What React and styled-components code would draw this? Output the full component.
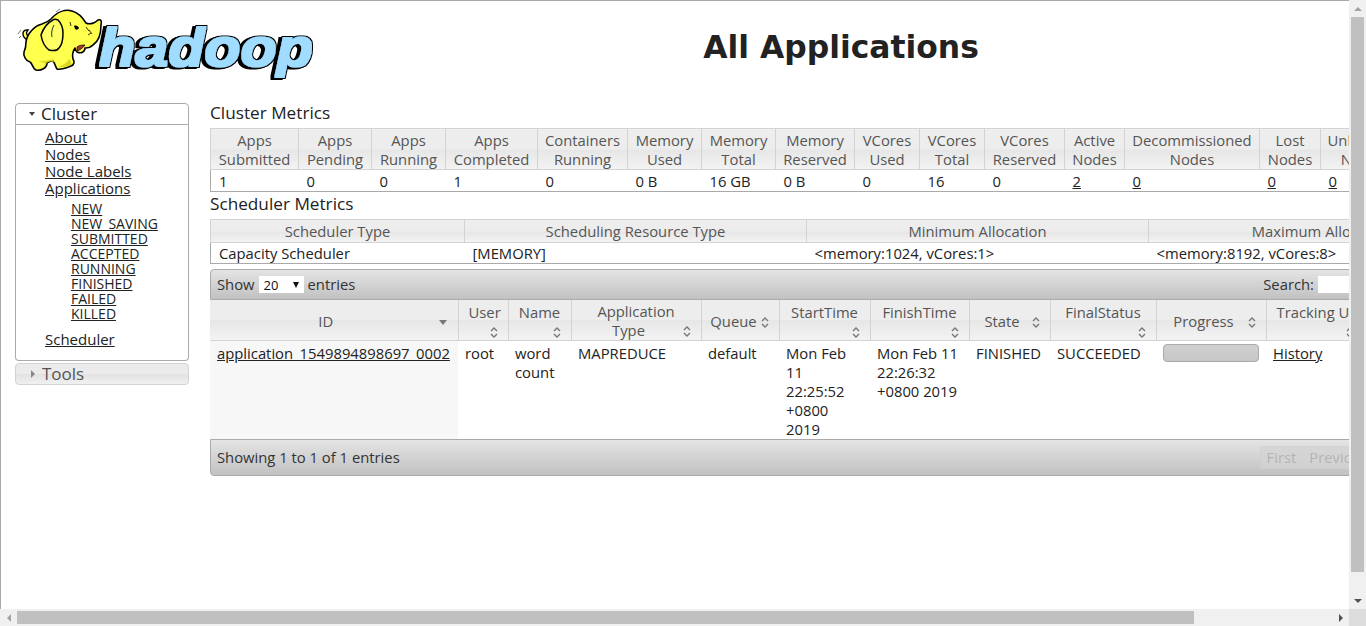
import React from "react";
import styled, { createGlobalStyle } from "styled-components";

const Global = createGlobalStyle`
  html, body { margin: 0; padding: 0; height: 100%; overflow: hidden; background: #fff; }
  body { font-family: "Open Sans", "Noto Sans", "Liberation Sans", sans-serif; font-size: 14.8px; color: #222; }
`;

const Shell = styled.div`
  display: grid;
  grid-template-columns: 1fr 17px;
  grid-template-rows: 1fr 17px;
  width: 1366px;
  height: 626px;
`;

const Viewport = styled.div`
  overflow: hidden;
  border-left: 1px solid #aaa;
  border-top: 1px solid #aaa;
`;

const Page = styled.div`
  width: 1506px;
`;

const Header = styled.header`
  display: flex;
  align-items: flex-start;
  height: 102px;
`;

const Logo = styled.svg`
  flex: none;
  width: 315px;
  height: 85px;
`;

const Wordmark = styled.text`
  font-family: "Liberation Sans", sans-serif;
  font-weight: 700;
  font-style: italic;
  font-size: 53px;
  fill: #9fdcff;
`;

const Title = styled.h1`
  margin: 26px 0 0;
  width: 1050px;
  text-align: center;
  font-family: "DejaVu Sans", sans-serif;
  font-size: 31.4px;
  line-height: 40px;
  font-weight: 700;
  color: #222;
`;

const Columns = styled.div`
  display: flex;
  align-items: flex-start;
`;

const Sidebar = styled.nav`
  flex: none;
  width: 174px;
  margin-left: 14px;
  margin-right: 21px;
`;

const AccordionHead = styled.div`
  display: flex;
  align-items: center;
  height: 19px;
  padding: 0 0 1px 13px;
  gap: 6px;
  font-size: 17px;
  color: ${p => (p.$open ? "#222" : "#555")};
  border: 1px solid #aaa;
  border-radius: ${p => (p.$open ? "4px 4px 0 0" : "4px")};
  background: ${p =>
    p.$open ? "#fff" : "linear-gradient(#ebebeb 0 50%, #e2e2e2 50%, #f0f0f0 100%)"};
  ${p => (p.$open ? "" : "margin-top: 2px; border-color: #d3d3d3;")}
`;

const Caret = styled.span`
  width: 0;
  height: 0;
  border-style: solid;
  ${p =>
    p.$open
      ? "border-width: 4px 3.5px 0 3.5px; border-color: #444 transparent transparent transparent;"
      : "border-width: 4px 0 4px 4px; border-color: transparent transparent transparent #888; margin-left: 2px; margin-right: 1px;"}
`;

const AccordionBody = styled.div`
  height: 231px;
  border: 1px solid #aaa;
  border-top: 0;
  border-radius: 0 0 4px 4px;
  padding: 4px 0 0 29px;
`;

const NavList = styled.ul`
  list-style: none;
  margin: 0;
  padding: 0;
`;

const NavItem = styled.li`
  font-size: 15px;
  line-height: 17px;
`;

const SubList = styled.ul`
  list-style: none;
  margin: 4px 0 10px;
  padding: 0 0 0 26px;
`;

const SubItem = styled.li`
  font-size: 14px;
  line-height: 15px;
`;

const Link = styled.a`
  color: #222;
  text-decoration: underline;
`;

const Content = styled.main`
  flex: none;
  width: 1287px;
`;

const SectionTitle = styled.h3`
  margin: ${p => p.$top || 0}px 0 0;
  padding-bottom: 6px;
  font-size: 17.2px;
  line-height: 19px;
  font-weight: 400;
  color: #222;
`;

const MetricsTable = styled.table`
  width: 100%;
  table-layout: fixed;
  border-collapse: collapse;
  border: 1px solid #aaa;
  border-top-color: #d3d3d3;
  margin-bottom: ${p => p.$gap || 0}px;
`;

const headBg = "linear-gradient(#ededed 0 50%, #e6e6e6 50%, #f3f3f3 100%)";

const HeadCell = styled.th`
  padding: ${p => p.$pad};
  font-weight: 400;
  line-height: 19px;
  color: #555;
  text-align: center;
  background: ${headBg};
  border: 1px solid #d3d3d3;
  border-top: 0;
  white-space: nowrap;
  overflow: hidden;
`;

const Cell = styled.td`
  padding: ${p => p.$top}px 8px 0;
  height: ${p => p.$h}px;
  box-sizing: border-box;
  line-height: 19px;
  white-space: nowrap;
  overflow: hidden;
`;

const Toolbar = styled.div`
  display: flex;
  align-items: center;
  justify-content: space-between;
  box-sizing: border-box;
  height: ${p => p.$height}px;
  padding: 0 6px 1px;
  color: #333;
  border: 1px solid #aaa;
  border-radius: ${p => p.$radius};
  background: linear-gradient(#e4e4e4, #c1c1c1);
`;

const Group = styled.div`
  display: flex;
  align-items: center;
  gap: 4px;
`;

const SelectWrap = styled.span`
  position: relative;
  display: block;
  width: 45px;
  height: 17px;
  background: #fff;
`;

const Select = styled.select`
  appearance: none;
  display: block;
  width: 100%;
  height: 100%;
  border: 0;
  padding: 0 0 0 5px;
  background: transparent;
  font: inherit;
  font-size: 13px;
  color: #111;
`;

const SelectArrow = styled.span`
  position: absolute;
  right: 5px;
  top: 6px;
  width: 0;
  height: 0;
  border-style: solid;
  border-width: 6px 3.5px 0 3.5px;
  border-color: #111 transparent transparent transparent;
`;

const SearchInput = styled.input`
  width: 172px;
  height: 17px;
  border: 0;
  padding: 0;
  background: #fff;
`;

const AppsTable = styled.table`
  width: 100%;
  table-layout: fixed;
  border-collapse: collapse;
`;

const SortIcon = styled.svg`
  float: right;
  width: 8px;
  height: 13px;
  margin: 4px 0 0 7px;
`;

const AppHead = styled.th`
  height: 40px;
  box-sizing: border-box;
  padding: 2px 10px 0 ${p => (p.$tight ? 7 : 10)}px;
  font-weight: 400;
  line-height: 19px;
  color: #555;
  text-align: center;
  vertical-align: middle;
  background: ${headBg};
  border-right: 1px solid #d3d3d3;
  border-bottom: 1px solid #d3d3d3;
  overflow: hidden;
  ${SortIcon} {
    margin-left: ${p => (p.$tight ? 2 : 7)}px;
  }
`;

const AppCell = styled.td`
  padding: 3px 7px 0;
  vertical-align: top;
  line-height: 19px;
  height: 97px;
  box-sizing: border-box;
  overflow: hidden;
  background: ${p => (p.$sorted ? "#f7f7f7" : "#fff")};
`;

const SortedIcon = styled.span`
  float: right;
  width: 0;
  height: 0;
  margin: 8px 1px 0 7px;
  border-style: solid;
  border-width: 5px 4px 0 4px;
  border-color: #777 transparent transparent transparent;
`;

const ProgressBar = styled.div`
  box-sizing: border-box;
  height: 18px;
  width: 96px;
  border: 1px solid #aaa;
  border-radius: 4px;
  background: linear-gradient(#d0d0d0, #c6c6c6);
`;

const Pager = styled.div`
  display: flex;
  height: 23px;
  margin-right: 6px;
`;

const PageButton = styled.span`
  display: flex;
  align-items: center;
  padding: 0 6px;
  color: #aaa;
  border: 1px solid #d0d0d0;
  border-left-width: ${p => (p.$first ? 1 : 0)}px;
  background: #d4d4d4;
  opacity: 0.75;
`;

const VTrack = styled.div`
  display: flex;
  flex-direction: column;
  align-items: center;
  background: #f0f0f0;
  width: 17px;
`;

const HTrack = styled.div`
  display: flex;
  align-items: center;
  background: #f0f0f0;
  height: 17px;
`;

const ArrowBox = styled.span`
  flex: none;
  display: flex;
  align-items: center;
  justify-content: center;
  width: 17px;
  height: 17px;
`;

const Tri = styled.span`
  width: 0;
  height: 0;
  border-style: solid;
  ${p => p.$dir === "up" && "border-width: 0 4px 4px 4px; border-color: transparent transparent #a3a3a3 transparent;"}
  ${p => p.$dir === "down" && "border-width: 4px 4px 0 4px; border-color: #505050 transparent transparent transparent;"}
  ${p => p.$dir === "left" && "border-width: 4px 4px 4px 0; border-color: transparent #a3a3a3 transparent transparent;"}
  ${p => p.$dir === "right" && "border-width: 4px 0 4px 4px; border-color: transparent transparent transparent #505050;"}
`;

const VThumb = styled.div`
  flex: none;
  width: 13px;
  height: 555px;
  background: #c0c0c0;
`;

const HThumb = styled.div`
  flex: none;
  width: 1177px;
  height: 13px;
  background: #c0c0c0;
`;

const Spring = styled.div`
  flex: 1;
`;

const Corner = styled.div`
  background: #dcdcdc;
`;

const Sort = () => (
  <SortIcon viewBox="0 0 8 13">
    <path d="M1 5 L4 2 L7 5 M1 8 L4 11 L7 8" fill="none" stroke="#777" strokeWidth="1.4" />
  </SortIcon>
);

const HadoopLogo = () => (
  <Logo viewBox="0 0 315 85">
    <defs>
      {/* fattens the letters, then a black outline pushed down-left */}
      <filter id="wordmark" x="-5%" y="-20%" width="110%" height="140%">
        <feMorphology in="SourceGraphic" operator="dilate" radius="0.9" result="fat" />
        <feMorphology in="SourceAlpha" operator="dilate" radius="2.4" result="line" />
        <feOffset in="line" dx="-3" dy="1" result="shadow" />
        <feMerge>
          <feMergeNode in="shadow" />
          <feMergeNode in="line" />
          <feMergeNode in="fat" />
        </feMerge>
      </filter>
    </defs>
    <Wordmark x="98" y="65" textLength="214" lengthAdjust="spacingAndGlyphs" filter="url(#wordmark)">hadoop</Wordmark>
    <path d="M17 33 L20 29 M20 35 L18 37 M55 11 L59 8" stroke="#777" strokeWidth="1" fill="none" />
    <path d="M26 39 C20 35 21 28 27 29 C24 32 26 35 29 36 Z" fill="#ffff55" stroke="#000" strokeWidth="1.4" />
    <path
      d="M50 18 C56 11 64 8 71 10 C78 12 82 17 85 22 C89 24 94 22 97 19 C100 18 101 20 100 24 C100 32 98 40 92 44 C89 47 86 47 84 47 C84 51 80 53 76 51 C75 50 74 49 74 47 C72 50 71 54 72 58 C74 61 73 64 70 65 C65 67 59 69 56 68 C54 65 54 62 52 60 C49 60 47 61 46 62 C46 67 40 70 35 69 C31 67 32 63 29 61 C25 60 22 55 23 51 C25 47 25 44 25 41 C26 33 33 25 41 23 C44 22 47 21 50 18 Z"
      fill="#ffff4d"
      stroke="#000"
      strokeWidth="1.6"
      strokeLinejoin="round"
    />
    <path d="M30 58 C38 62 46 60 52 58 L53 61 C48 60 46 61 45 63 C40 60 34 60 30 58 Z" fill="#d8d820" />
    <path d="M68 58 C70 60 71 62 70 64 C66 66 62 66 58 66 C62 64 66 62 68 58 Z" fill="#d8d820" />
    <path
      d="M52 19 C46 22 42 28 40 34 C41 40 44 46 48 49 C52 50 56 50 58 47 C61 44 62 38 62 32 C62 27 60 22 57 19 C55 18 53 18 52 19 Z"
      fill="#ffff66"
      stroke="#000"
      strokeWidth="1.5"
    />
    <path d="M53 24 C51 28 50 32 51 36" fill="none" stroke="#000" strokeWidth="0.8" />
    <path d="M73 25 C75 24 77 25 78 27 C77 29 75 29 74 28 Z" fill="#000" />
    <path d="M69 21 L70 25 M85 26 L88 30 M88 29 L91 33 M87 34 L90 32" stroke="#000" strokeWidth="0.8" fill="none" />
    <path d="M76 50 C79 49 82 47 84 44 C82 44 78 44 76 46 Z" fill="#a33" stroke="#000" strokeWidth="0.7" />
  </Logo>
);

const clusterCols = [
  { w: 88, h: ["Apps", "Submitted"], v: "1" },
  { w: 73, h: ["Apps", "Pending"], v: "0" },
  { w: 74, h: ["Apps", "Running"], v: "0" },
  { w: 92, h: ["Apps", "Completed"], v: "1" },
  { w: 90, h: ["Containers", "Running"], v: "0" },
  { w: 74, h: ["Memory", "Used"], v: "0 B" },
  { w: 74, h: ["Memory", "Total"], v: "16 GB" },
  { w: 79, h: ["Memory", "Reserved"], v: "0 B" },
  { w: 65, h: ["VCores", "Used"], v: "0" },
  { w: 65, h: ["VCores", "Total"], v: "16" },
  { w: 80, h: ["VCores", "Reserved"], v: "0" },
  { w: 60, h: ["Active", "Nodes"], v: "2", link: true },
  { w: 135, h: ["Decommissioned", "Nodes"], v: "0", link: true },
  { w: 61, h: ["Lost", "Nodes"], v: "0", link: true },
  { w: 85, h: ["Unhealthy", "Nodes"], v: "0", link: true },
  { h: ["Rebooted", "Nodes"], v: "0", link: true },
];

const schedCols = [
  { w: 254, h: "Scheduler Type", v: "Capacity Scheduler" },
  { w: 342, h: "Scheduling Resource Type", v: "[MEMORY]" },
  { w: 342, h: "Minimum Allocation", v: "<memory:1024, vCores:1>" },
  { h: "Maximum Allocation", v: "<memory:8192, vCores:8>" },
];

const appCols = [
  { w: 248, h: "ID", sorted: true, v: <Link href="#">application_1549894898697_0002</Link>, bg: true },
  { w: 50, h: "User", v: "root" },
  { w: 63, h: "Name", v: "word count" },
  { w: 130, h: <>Application<br />Type</>, v: "MAPREDUCE" },
  { w: 78, h: "Queue", v: "default", tight: true },
  { w: 91, h: "StartTime", v: "Mon Feb 11 22:25:52 +0800 2019" },
  { w: 99, h: "FinishTime", v: "Mon Feb 11 22:26:32 +0800 2019" },
  { w: 81, h: "State", v: "FINISHED" },
  { w: 106, h: "FinalStatus", v: "SUCCEEDED" },
  { w: 110, h: "Progress", v: <ProgressBar /> },
  { w: 98, h: "Tracking UI", v: <Link href="#">History</Link> },
  { h: "Blacklisted Nodes", v: "N/A" },
];

const states = ["NEW", "NEW_SAVING", "SUBMITTED", "ACCEPTED", "RUNNING", "FINISHED", "FAILED", "KILLED"];

export default function App() {
  return (
    <>
      <Global />
      <Shell>
        <Viewport>
          <Page>
            <Header>
              <HadoopLogo />
              <Title>All Applications</Title>
            </Header>
            <Columns>
              <Sidebar>
                <AccordionHead $open><Caret $open />Cluster</AccordionHead>
                <AccordionBody>
                  <NavList>
                    <NavItem><Link href="#">About</Link></NavItem>
                    <NavItem><Link href="#">Nodes</Link></NavItem>
                    <NavItem><Link href="#">Node Labels</Link></NavItem>
                    <NavItem>
                      <Link href="#">Applications</Link>
                      <SubList>
                        {states.map(s => (
                          <SubItem key={s}><Link href="#">{s}</Link></SubItem>
                        ))}
                      </SubList>
                    </NavItem>
                    <NavItem><Link href="#">Scheduler</Link></NavItem>
                  </NavList>
                </AccordionBody>
                <AccordionHead><Caret />Tools</AccordionHead>
              </Sidebar>
              <Content>
                <SectionTitle>Cluster Metrics</SectionTitle>
                <MetricsTable>
                  <colgroup>
                    {clusterCols.map((c, i) => <col key={i} width={c.w} />)}
                  </colgroup>
                  <thead>
                    <tr>
                      {clusterCols.map((c, i) => (
                        <HeadCell key={i} $pad="2px 3px 0">{c.h[0]}<br />{c.h[1]}</HeadCell>
                      ))}
                    </tr>
                  </thead>
                  <tbody>
                    <tr>
                      {clusterCols.map((c, i) => (
                        <Cell key={i} $h={22} $top={2}>{c.link ? <Link href="#">{c.v}</Link> : c.v}</Cell>
                      ))}
                    </tr>
                  </tbody>
                </MetricsTable>
                <SectionTitle $top={2}>Scheduler Metrics</SectionTitle>
                <MetricsTable $gap={5}>
                  <colgroup>
                    {schedCols.map((c, i) => <col key={i} width={c.w} />)}
                  </colgroup>
                  <thead>
                    <tr>
                      {schedCols.map((c, i) => (
                        <HeadCell key={i} $pad="2px 3px 1px">{c.h}</HeadCell>
                      ))}
                    </tr>
                  </thead>
                  <tbody>
                    <tr>
                      {schedCols.map((c, i) => <Cell key={i} $h={21} $top={1}>{c.v}</Cell>)}
                    </tr>
                  </tbody>
                </MetricsTable>
                <Toolbar $height={31} $radius="4px 4px 0 0">
                  <Group>
                    Show
                    <SelectWrap>
                      <Select defaultValue="20">
                        <option>20</option>
                        <option>40</option>
                        <option>60</option>
                      </Select>
                      <SelectArrow />
                    </SelectWrap>
                    entries
                  </Group>
                  <Group>
                    Search:
                    <SearchInput />
                  </Group>
                </Toolbar>
                <AppsTable>
                  <colgroup>
                    {appCols.map((c, i) => <col key={i} width={c.w} />)}
                  </colgroup>
                  <thead>
                    <tr>
                      {appCols.map((c, i) => (
                        <AppHead key={i} $tight={c.tight}>
                          {c.h}
                          {c.sorted ? <SortedIcon /> : <Sort />}
                        </AppHead>
                      ))}
                    </tr>
                  </thead>
                  <tbody>
                    <tr>
                      {appCols.map((c, i) => (
                        <AppCell key={i} $sorted={c.bg}>{c.v}</AppCell>
                      ))}
                    </tr>
                  </tbody>
                </AppsTable>
                <Toolbar $height={37} $radius="0 0 4px 4px">
                  <span>Showing 1 to 1 of 1 entries</span>
                  <Pager>
                    <PageButton $first>First</PageButton>
                    <PageButton>Previous</PageButton>
                    <PageButton>1</PageButton>
                    <PageButton>Next</PageButton>
                    <PageButton>Last</PageButton>
                  </Pager>
                </Toolbar>
              </Content>
            </Columns>
          </Page>
        </Viewport>
        <VTrack>
          <ArrowBox><Tri $dir="up" /></ArrowBox>
          <VThumb />
          <Spring />
          <ArrowBox><Tri $dir="down" /></ArrowBox>
        </VTrack>
        <HTrack>
          <ArrowBox><Tri $dir="left" /></ArrowBox>
          <HThumb />
          <Spring />
          <ArrowBox><Tri $dir="right" /></ArrowBox>
        </HTrack>
        <Corner />
      </Shell>
    </>
  );
}
